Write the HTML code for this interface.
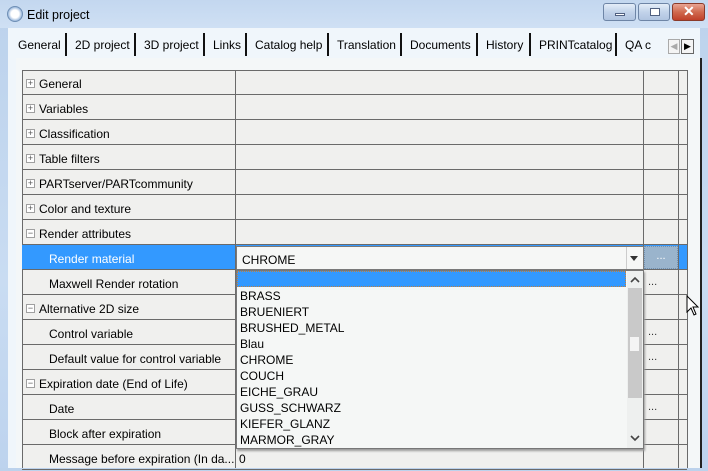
<!DOCTYPE html>
<html><head><meta charset="utf-8"><style>
*{margin:0;padding:0;box-sizing:border-box}
body{width:708px;height:468px;overflow:hidden;font-family:"Liberation Sans",sans-serif;font-size:12px;color:#000;position:relative;background:linear-gradient(#bcd2ec,#c9dcf2 60%,#bdd3ee)}
.a{position:absolute}
.t{white-space:nowrap}
.btn{position:absolute;top:3px;height:18px;border:1px solid #6e85a6;border-radius:3px;background:linear-gradient(#e4edf8,#c2d3ea 50%,#b0c4e0)}
.row{position:absolute;left:22px;width:665px;height:25px;border-bottom:1px solid #6a6a6a}
.row .l{position:absolute;top:2px;height:24px;line-height:24px}
.pm{position:absolute;left:4px;top:9px;width:9px;height:9px;border:1px solid #a0a0a0;background:#fff;font-size:9px;line-height:7px;text-align:center;color:#555}
.dots{position:absolute;left:626px;top:6px;font-size:11px;color:#333}
.vl{position:absolute;top:70px;width:1px;background:#6a6a6a}
.it{position:absolute;left:4px;height:16px;line-height:16px}
.tab{position:absolute;top:38px;white-space:nowrap;font-size:12px}
.sep{position:absolute;top:33px;width:2px;height:23px;background:#111}
</style></head><body>
<div class="a" style="left:0;top:0;width:708px;height:28px;background:linear-gradient(#c3d7ef,#cfe0f4)"></div>
<div class="a" style="left:7px;top:6px;width:16px;height:16px;border-radius:50%;background:radial-gradient(circle at 50% 50%,#fff 40%,#9bb8dc 70%,#5f86b8);border:1px solid #6f8fb5"></div>
<div class="a t" style="left:27px;top:8px;font-size:12.5px">Edit project</div>
<div class="btn" style="left:603px;width:33px"><div class="a" style="left:11px;top:9px;width:10px;height:3px;background:#fff;border:1px solid #506080"></div></div>
<div class="btn" style="left:638px;width:32px"><div class="a" style="left:11px;top:4px;width:10px;height:8px;background:#fff;border:1px solid #506080"></div></div>
<div class="btn" style="left:672px;width:33px;border-color:#8a3a2a;background:linear-gradient(#e9a493,#d06a4f 50%,#c0412a)"><div class="a t" style="left:10px;top:-1px;color:#fff;font-weight:bold;font-size:14px">✕</div></div>
<div class="a" style="left:8px;top:28px;width:692px;height:440px;background:#f0f6fb"></div>
<div class="tab" style="left:18px">General</div><div class="sep" style="left:65px"></div>
<div class="tab" style="left:75px">2D project</div><div class="sep" style="left:134px"></div>
<div class="tab" style="left:144px">3D project</div><div class="sep" style="left:203px"></div>
<div class="tab" style="left:213px">Links</div><div class="sep" style="left:245px"></div>
<div class="tab" style="left:255px">Catalog help</div><div class="sep" style="left:327px"></div>
<div class="tab" style="left:337px">Translation</div><div class="sep" style="left:400px"></div>
<div class="tab" style="left:410px">Documents</div><div class="sep" style="left:476px"></div>
<div class="tab" style="left:486px">History</div><div class="sep" style="left:529px"></div>
<div class="tab" style="left:539px">PRINTcatalog</div><div class="sep" style="left:615px"></div>
<div class="tab" style="left:625px">QA c</div>
<div class="a" style="left:668px;top:39px;width:12px;height:15px;border:1px solid #aaa;background:#f4f4f4;font-size:9px;color:#aaa;text-align:center;line-height:13px">◀</div>
<div class="a" style="left:681px;top:39px;width:13px;height:15px;border:1px solid #666;background:#f4f4f4;font-size:9px;color:#000;text-align:center;line-height:13px">▶</div>
<div class="a" style="left:16px;top:58px;width:686px;height:410px;background:#f4f7f8;border-right:2px solid #222"></div>
<div class="a" style="left:22px;top:70px;width:666px;height:398px;background:#f0f0ee;border-left:1px solid #6a6a6a;border-top:1px solid #6a6a6a;border-right:1px solid #6a6a6a"></div>
<div class="row" style="top:70px"><div class="pm">+</div><div class="l t" style="left:17px">General</div></div>
<div class="row" style="top:95px"><div class="pm">+</div><div class="l t" style="left:17px">Variables</div></div>
<div class="row" style="top:120px"><div class="pm">+</div><div class="l t" style="left:17px">Classification</div></div>
<div class="row" style="top:145px"><div class="pm">+</div><div class="l t" style="left:17px">Table filters</div></div>
<div class="row" style="top:170px"><div class="pm">+</div><div class="l t" style="left:17px">PARTserver/PARTcommunity</div></div>
<div class="row" style="top:195px"><div class="pm">+</div><div class="l t" style="left:17px">Color and texture</div></div>
<div class="row" style="top:220px"><div class="pm">−</div><div class="l t" style="left:17px">Render attributes</div></div>
<div class="row" style="top:245px;background:#3399ff;color:#fff"><div class="l t" style="left:27px">Render material</div></div>
<div class="row" style="top:270px"><div class="l t" style="left:27px">Maxwell Render rotation</div><div class="dots">...</div></div>
<div class="row" style="top:295px"><div class="pm">−</div><div class="l t" style="left:17px">Alternative 2D size</div></div>
<div class="row" style="top:320px"><div class="l t" style="left:27px">Control variable</div><div class="dots">...</div></div>
<div class="row" style="top:345px"><div class="l t" style="left:27px">Default value for control variable</div><div class="dots">...</div></div>
<div class="row" style="top:370px"><div class="pm">−</div><div class="l t" style="left:17px">Expiration date (End of Life)</div></div>
<div class="row" style="top:395px"><div class="l t" style="left:27px">Date</div><div class="dots">...</div></div>
<div class="row" style="top:420px"><div class="l t" style="left:27px">Block after expiration</div></div>
<div class="row" style="top:445px"><div class="l t" style="left:27px">Message before expiration (In da...</div><div class="l t" style="left:217px">0</div></div>
<div class="vl" style="left:235px;height:398px"></div>
<div class="vl" style="left:643px;height:398px"></div>
<div class="vl" style="left:678px;height:398px"></div>
<div class="a" style="left:644px;top:246px;width:34px;height:23px;background:#9ab4cc;border:1px dotted #7090b0;color:#fff;text-align:center;line-height:18px;font-size:11px">...</div>
<div class="a" style="left:236px;top:246px;width:408px;height:24px;background:#f6f7f6;border:1px solid #7a7a7a"></div>
<div class="a t" style="left:242px;top:253px">CHROME</div>
<div class="a" style="left:626px;top:247px;width:1px;height:22px;background:#ccc"></div>
<div class="a" style="left:630px;top:256px;width:0;height:0;border-left:4px solid transparent;border-right:4px solid transparent;border-top:5px solid #333"></div>
<div class="a" style="left:236px;top:270px;width:408px;height:179px;background:#f5f7f6;border:1px solid #777;box-shadow:1px 2px 2px #999"></div>
<div class="a" style="left:237px;top:271px;width:389px;height:16px;background:#3399ff;border:1px dotted #c08040"></div>
<div class="a" style="left:236px;top:288px;width:390px;font-size:12px">
<div class="it" style="top:0">BRASS</div><div class="it" style="top:16px">BRUENIERT</div><div class="it" style="top:32px">BRUSHED_METAL</div><div class="it" style="top:48px">Blau</div><div class="it" style="top:64px">CHROME</div><div class="it" style="top:80px">COUCH</div><div class="it" style="top:96px">EICHE_GRAU</div><div class="it" style="top:112px">GUSS_SCHWARZ</div><div class="it" style="top:128px">KIEFER_GLANZ</div><div class="it" style="top:144px">MARMOR_GRAY</div></div>
<div class="a" style="left:627px;top:271px;width:16px;height:177px;background:#eef0ef"></div>
<div class="a" style="left:628px;top:288px;width:14px;height:110px;background:#c9c9c9"></div>
<div class="a" style="left:630px;top:337px;width:9px;height:14px;background:#f4f4f4"></div>
<svg class="a" style="left:630px;top:276px" width="10" height="8"><path d="M1 6 L5 2 L9 6" fill="none" stroke="#444" stroke-width="1.6"/></svg>
<svg class="a" style="left:630px;top:434px" width="10" height="8"><path d="M1 2 L5 6 L9 2" fill="none" stroke="#444" stroke-width="1.6"/></svg>
<svg class="a" style="left:686px;top:295px" width="14" height="22"><path d="M1 1 L1 17 L5 13 L8 20 L10 19 L7 12 L12 12 Z" fill="#fff" stroke="#000" stroke-width="1"/></svg>
</body></html>
